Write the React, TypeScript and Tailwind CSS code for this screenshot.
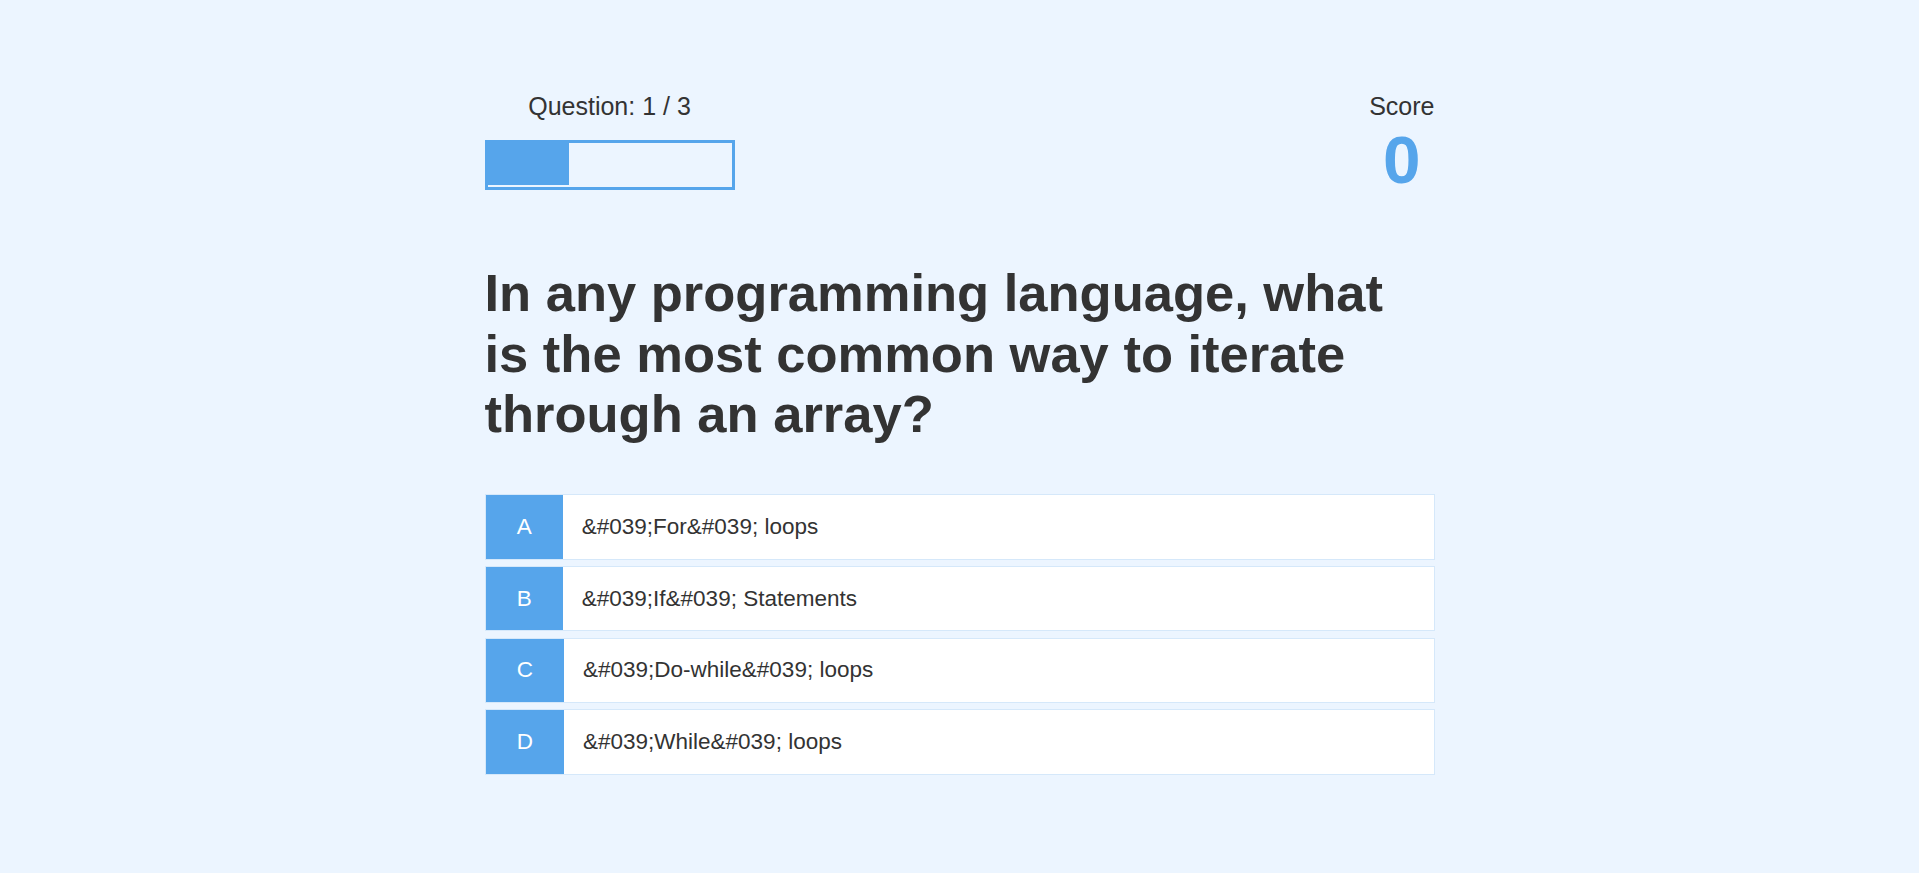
export default function App() {
  const choices = [
    { p: "A", t: "&#039;For&#039; loops" },
    { p: "B", t: "&#039;If&#039; Statements" },
    { p: "C", t: "&#039;Do-while&#039; loops" },
    { p: "D", t: "&#039;While&#039; loops" },
  ];
  return (
    <div className="min-h-screen bg-[#ecf5ff] font-['Liberation_Sans',Arial,sans-serif] text-[#333]">
      <div className="mx-auto flex h-screen w-full max-w-[1000px] flex-col justify-center p-[25px]">
        <div className="flex justify-between">
          <div className="w-[250px]">
            <p className="text-center text-[25px] leading-[1.15]">Question: 1 / 3</p>
            <div className="mt-[18.75px] h-[50px] w-[250px] border-[3.75px] border-[#56a5eb]">
              <div className="h-[42.5px] w-1/3 bg-[#56a5eb]" />
            </div>
          </div>
          <div>
            <p className="text-center text-[25px] leading-[1.15]">Score</p>
            <h1 className="mb-[64.5px] text-center text-[67.5px] font-bold leading-[1.15] text-[#56a5eb]">0</h1>
          </div>
        </div>
        <h2 className="mb-[50px] text-[52.5px] font-bold leading-[1.15]">
          In any programming language, what is the most common way to iterate through an array?
        </h2>
        {choices.map((c) => (
          <div
            key={c.p}
            className="mb-[6.25px] flex w-full border border-[rgba(86,165,235,0.25)] bg-white text-[22.5px] leading-[1.15]"
          >
            <p className="bg-[#56a5eb] px-[31.25px] py-[18.75px] text-white">{c.p}</p>
            <p className="w-full p-[18.75px]">{c.t}</p>
          </div>
        ))}
      </div>
    </div>
  );
}
